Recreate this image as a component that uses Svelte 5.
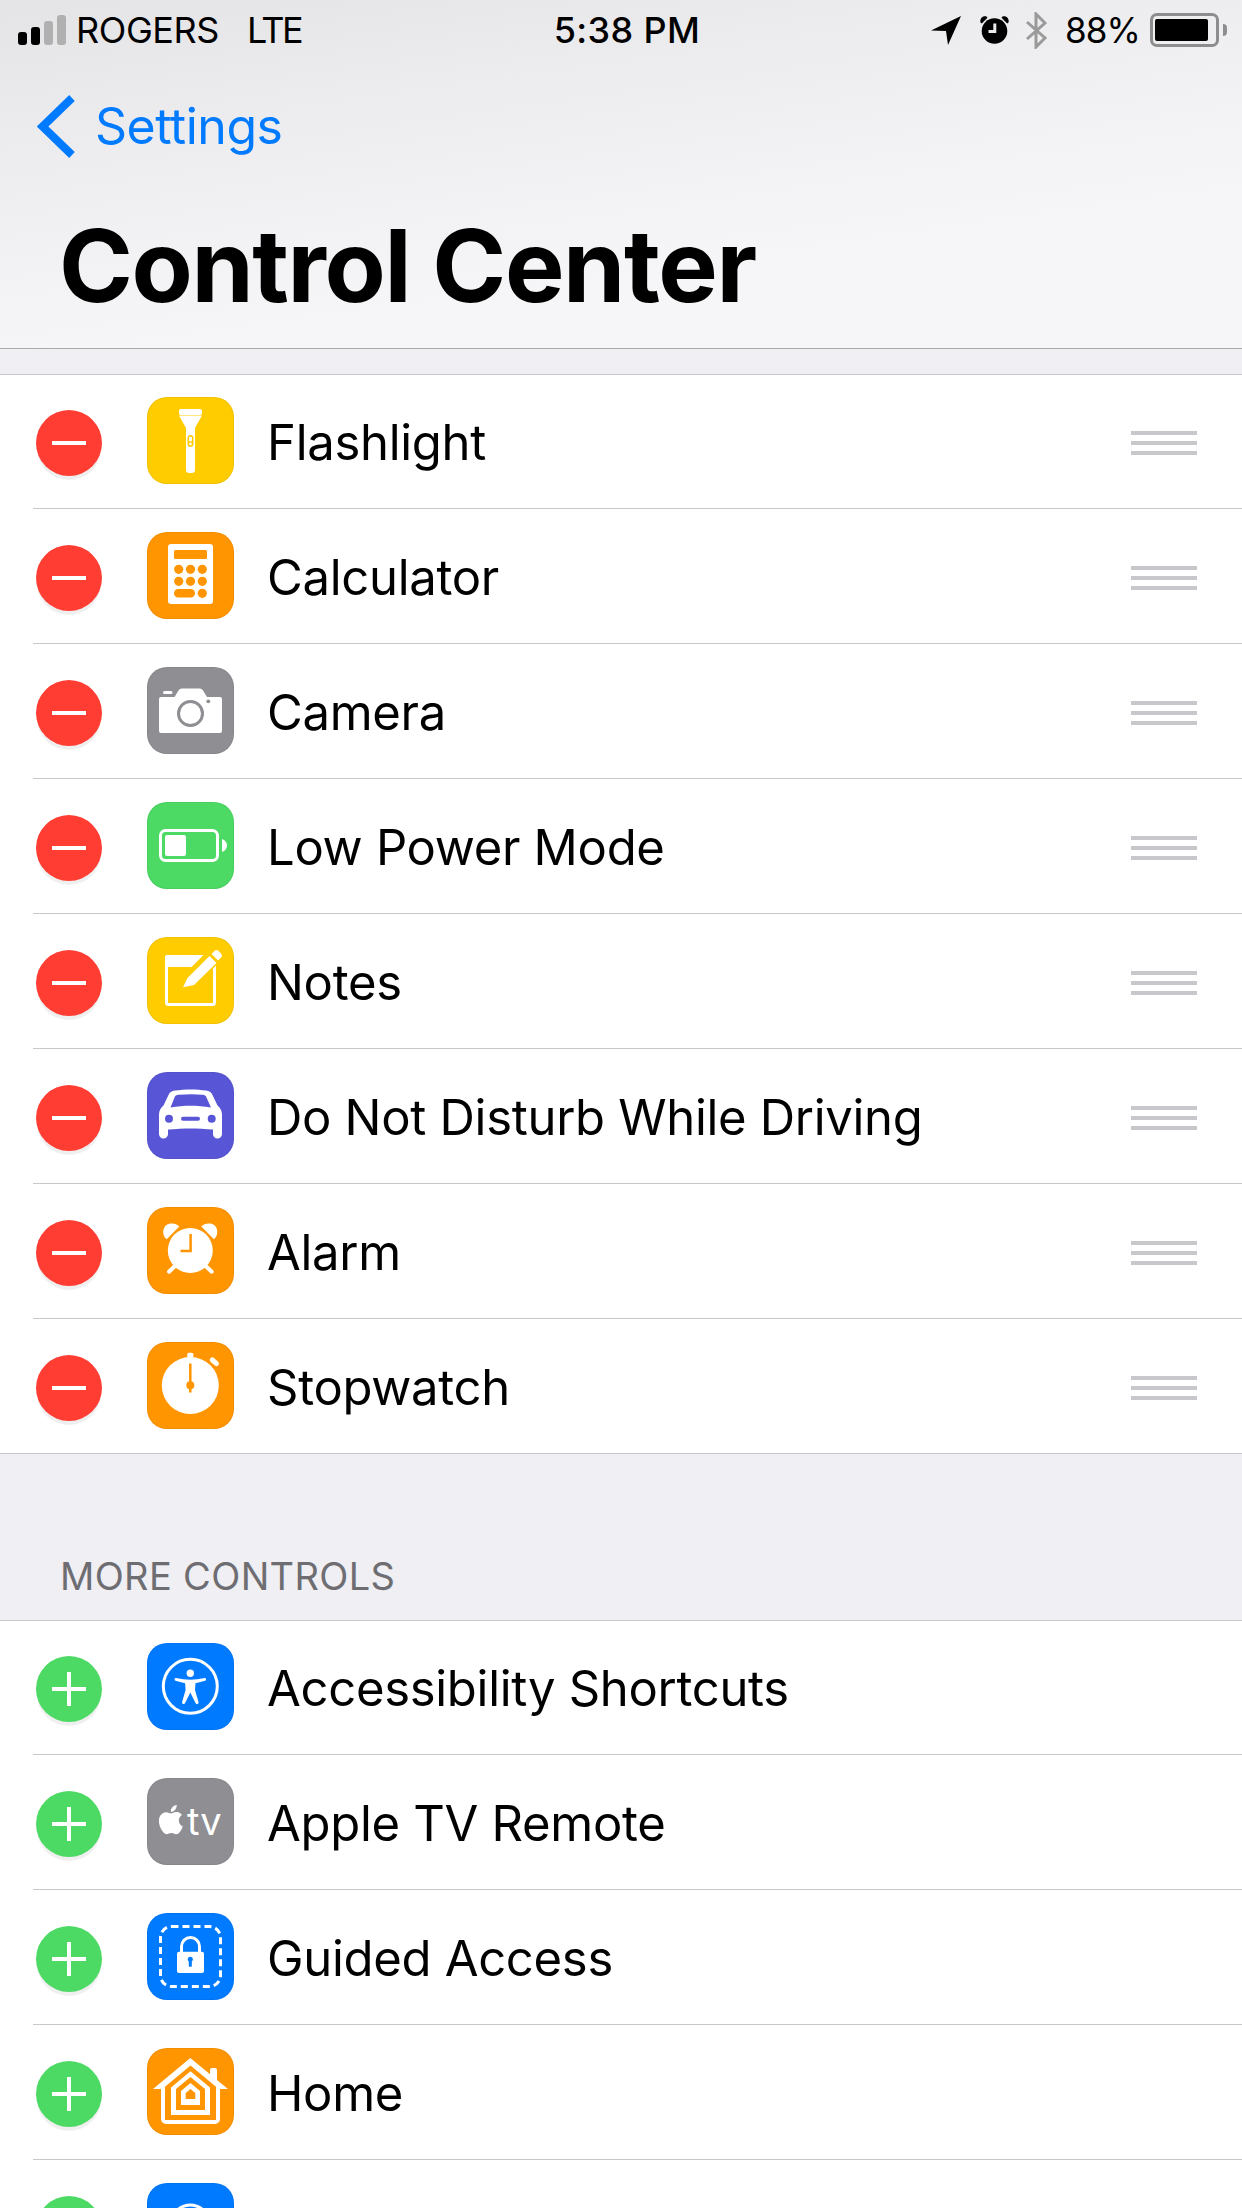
<script>
  const active = [
    { id: 'flash', label: 'Flashlight', tone: 'yellow' },
    { id: 'calc', label: 'Calculator', tone: 'orange' },
    { id: 'camera', label: 'Camera', tone: 'gray' },
    { id: 'battery', label: 'Low Power Mode', tone: 'green' },
    { id: 'notes', label: 'Notes', tone: 'yellow' },
    { id: 'car', label: 'Do Not Disturb While Driving', tone: 'indigo' },
    { id: 'alarm', label: 'Alarm', tone: 'orange' },
    { id: 'stopwatch', label: 'Stopwatch', tone: 'orange' }
  ];
  const more = [
    { id: 'access', label: 'Accessibility Shortcuts', tone: 'blue' },
    { id: 'tv', label: 'Apple TV Remote', tone: 'gray' },
    { id: 'guided', label: 'Guided Access', tone: 'blue' },
    { id: 'home', label: 'Home', tone: 'orange' },
    { id: 'magnifier', label: 'Magnifier', tone: 'blue' }
  ];
</script>

{#snippet glyph(id)}
  <svg class="glyph" viewBox="0 0 87 87" aria-hidden="true">
    {#if id === 'flash'}
      <rect x="32" y="12" width="23" height="6" rx="2" />
      <path d="M32 18.5H55L48 31V73a3 3 0 0 1-3 3H42a3 3 0 0 1-3-3V31Z" />
      <rect class="cut" x="40.5" y="38" width="6" height="12" rx="3" />
      <rect x="42" y="39.5" width="3" height="5" rx="1.5" />
      <circle cx="43.5" cy="47" r="1.4" />
    {:else if id === 'calc'}
      <rect x="21" y="12" width="45" height="60" rx="3" />
      <rect class="cut" x="27" y="18" width="33" height="9" rx="1.5" />
      {#each [37.3, 49.3] as y}
        {#each [31.7, 43.5, 55.3] as x}
          <circle class="cut" cx={x} cy={y} r="4.6" />
        {/each}
      {/each}
      <rect class="cut" x="27" y="57" width="21" height="8.6" rx="4.3" />
      <circle class="cut" cx="55.3" cy="61.3" r="4.6" />
    {:else if id === 'camera'}
      <path d="M12 32a2 2 0 0 1 2-2H27.500L31.500 23.500A4 4 0 0 1 35 21.500H52.500A4 4 0 0 1 56 23.500L60 30H73a2 2 0 0 1 2 2V64a2 2 0 0 1-2 2H14a2 2 0 0 1-2-2Z" />
      <rect x="16" y="24" width="9.500" height="3" rx="1.500" />
      <circle class="line-soft" cx="43.500" cy="46.500" r="12" />
      <circle class="cut" cx="61.300" cy="34.300" r="1.900" />
    {:else if id === 'battery'}
      <rect class="line" x="13.500" y="28.500" width="57" height="30" rx="5" />
      <rect x="18" y="33" width="21" height="21" rx="2" />
      <path d="M75 37C78 38 80 40.500 80 43.500S78 49 75 50Z" />
    {:else if id === 'notes'}
      <rect class="line" x="19.500" y="19.500" width="48" height="48" rx="2" />
      <rect x="18" y="18" width="51" height="12" rx="2" />
      <path class="cut-line" d="M37 49L70 16" />
      <path d="M36 50.300L40.500 41L62.500 19L69.500 26L47 48Z" />
      <path d="M64.500 17L67.500 14A3 3 0 0 1 71.500 14L74 16.500A3 3 0 0 1 74 20.500L71 23.500Z" />
    {:else if id === 'car'}
      <path d="M28 18.500C38 17 50 17 59 18.500C62.500 19 64.500 20.500 65.500 23L70.500 33.500C73 35.500 75 38.500 75 42.500V62a4.500 4.500 0 0 1-9 0V57.500C50 56 37 56 21 57.500V62a4.500 4.500 0 0 1-9 0V42.500C12 38.500 14 35.500 16.500 33.500L21.500 23C22.500 20.500 24.500 19 28 18.500Z" />
      <path class="cut" d="M23.500 35.500L27.500 25.500C28 23.800 29.500 23 31.500 22.800C40 22 48 22 55.500 22.800C57.500 23 59 23.800 59.500 25.500L64 35.500C50 33 37 33 23.500 35.500Z" />
      <circle class="cut" cx="22" cy="46.700" r="4" />
      <circle class="cut" cx="64.700" cy="46.700" r="4" />
      <rect class="cut" x="34" y="44.700" width="19" height="4" rx="2" />
    {:else if id === 'alarm'}
      <circle cx="43.300" cy="43.500" r="22.500" />
      <path class="hand" d="M43.600 27V44H33.500" />
      <path d="M19.700 32.300C13.500 27 16 16 25 16.500C28 16.500 30.500 17.500 32.300 19.500Z" />
      <path d="M66.900 32.300C73.100 27 70.600 16 61.600 16.500C58.600 16.500 56.100 17.500 54.300 19.500Z" />
      <path class="leg" d="M22 64.700L28 59M64.700 64.700L58.700 59" />
    {:else if id === 'stopwatch'}
      <circle cx="43.300" cy="43.500" r="28.500" />
      <rect x="40.300" y="10.700" width="6" height="7" rx="1.500" />
      <path class="leg wide" d="M65.300 18L69.500 21.700" />
      <path class="hand" d="M43.300 21.500V50.500" />
      <circle class="cut" cx="43.300" cy="43.300" r="4" />
    {:else if id === 'access'}
      <circle class="line" cx="43.300" cy="43.300" r="27" />
      <circle cx="43.300" cy="30.300" r="3.700" />
      <path d="M29 35Q43.300 38.500 57.600 35A1.400 1.400 0 0 1 58.200 37.700L48.500 40.300L48 47L51.500 59A1.500 1.500 0 0 1 48.500 60L43.300 49.500L38.100 60A1.500 1.500 0 0 1 35.100 59L38.600 47L38.100 40.300L28.400 37.700A1.400 1.400 0 0 1 29 35Z" />
    {:else if id === 'tv'}
      <g transform="translate(9.200 27) scale(1.220)">
        <path d="M12.152 6.896c-.948 0-2.415-1.078-3.96-1.04-2.04.027-3.91 1.183-4.961 3.014-2.117 3.675-.546 9.103 1.519 12.09 1.013 1.454 2.208 3.09 3.792 3.039 1.52-.065 2.09-.987 3.935-.987 1.831 0 2.35.987 3.96.948 1.637-.026 2.676-1.48 3.676-2.948 1.156-1.688 1.636-3.325 1.662-3.415-.039-.013-3.182-1.221-3.22-4.857-.026-3.04 2.48-4.494 2.597-4.559-1.429-2.09-3.623-2.324-4.39-2.376-2-.156-3.675 1.09-4.61 1.09zM15.530 3.830c.843-1.012 1.400-2.427 1.245-3.830-1.207.052-2.662.805-3.532 1.818-.780.896-1.454 2.338-1.273 3.714 1.338.104 2.715-.688 3.559-1.701" />
      </g>
      <text class="tv" x="40" y="57">tv</text>
    {:else if id === 'guided'}
      <rect class="dash" x="13.500" y="13.500" width="60" height="60" rx="11" />
      <path class="shackle" d="M34.500 39V33.500a9 9 0 0 1 18 0V39" />
      <rect x="30" y="38.700" width="27" height="21.300" rx="2" />
      <circle class="cut" cx="43.300" cy="46.300" r="2.500" />
      <rect class="cut" x="41.800" y="46.500" width="3" height="7.200" />
    {:else if id === 'home'}
      <path d="M43.300 10L63 26.300V22a2 2 0 0 1 2-2H68a2 2 0 0 1 2 2V32L81 41H73V71a5 5 0 0 1-5 5H19a5 5 0 0 1-5-5V41H6Z" />
      <path class="cut" d="M43.500 17.600L69 38.800V72H18V38.800Z" />
      <path d="M43.500 23.300L63 39.500V67H24V39.500Z" />
      <path class="cut" d="M43.500 29L58 41V62H29V41Z" />
      <path d="M43.500 35L53 43V57H34V43Z" />
      <path class="cut" d="M43.500 41L48.300 45V51H38.700V45Z" />
    {:else if id === 'magnifier'}
      <circle class="line" cx="43.300" cy="41" r="19" />
    {/if}
  </svg>
{/snippet}

{#snippet row(item, kind)}
  <li class="row">
    <span class="badge {kind}"></span>
    <span class="tile {item.tone}">{@render glyph(item.id)}</span>
    <span class="label">{item.label}</span>
    {#if kind === 'remove'}
      <span class="grip"><i></i><i></i><i></i></span>
    {/if}
  </li>
{/snippet}

<div class="phone">
  <header class="top">
    <div class="status">
      <div class="status-left">
        <span class="signal"><i class="s1"></i><i class="s2"></i><i class="s3"></i><i class="s4"></i></span>
        <span class="carrier">ROGERS</span>
        <span class="net">LTE</span>
      </div>
      <div class="clock">5:38 PM</div>
      <div class="status-right">
        <svg class="st-loc" viewBox="0 0 30 29"><path d="M30 0L0 14.500L15 15L17 29Z" /></svg>
        <svg class="st-alarm" viewBox="0 0 29 28">
          <circle cx="14.500" cy="15" r="12.800" />
          <path class="st-hand" d="M14.800 7.500V15.500H8.500" />
          <path d="M0.500 6.500C-0.500 2.500 3 -0.500 6.500 0.500L7.500 1.800L1.800 7.500Z" />
          <path d="M28.500 6.500C29.500 2.500 26 -0.500 22.500 0.500L21.500 1.800L27.200 7.500Z" />
        </svg>
        <svg class="st-bt" viewBox="0 0 22 37"><path d="M2 10L20 26L11 35V2L20 11L2 27" /></svg>
        <span class="pct">88%</span>
        <span class="battery"><span class="cell"></span></span>
        <span class="nub"></span>
      </div>
    </div>
    <a class="back" href="#settings">
      <svg class="chev" viewBox="0 0 38 63"><path d="M35 3L5.500 31.500L35 60" /></svg>
      <span>Settings</span>
    </a>
    <h1>Control Center</h1>
  </header>

  <div class="band"></div>
  <ul class="list">
    {#each active as item}
      {@render row(item, 'remove')}
    {/each}
  </ul>

  <h2 class="section">MORE CONTROLS</h2>
  <ul class="list">
    {#each more as item}
      {@render row(item, 'add')}
    {/each}
  </ul>
</div>

<style>
  :global(body) { margin: 0; background: #efeff4; }
  .phone {
    width: 1242px;
    height: 2208px;
    overflow: hidden;
    background: #efeff4;
    font-family: Inter, "Liberation Sans", sans-serif;
    color: #000;
  }
  .top {
    height: 348px;
    border-bottom: 1px solid #a9a9ab;
    background: linear-gradient(172deg, #e4e4e7 0%, #eeeef0 35%, #f6f6f8 70%, #f6f6f8 100%);
    display: flex;
    flex-direction: column;
  }
  .status {
    height: 60px;
    display: grid;
    grid-template-columns: 1fr auto 1fr;
    align-items: center;
  }
  .status-left { display: flex; align-items: center; padding-left: 18px; font-size: 36px; letter-spacing: -0.4px; }
  .signal { display: flex; align-items: flex-end; gap: 4px; height: 30px; margin-right: 10px; }
  .signal i { display: block; width: 9px; border-radius: 3px; background: #000; }
  .s1 { height: 13px; }
  .s2 { height: 18px; }
  .s3 { height: 24px; background: #b0b0b0 !important; }
  .s4 { height: 30px; background: #b0b0b0 !important; }
  .net { margin-left: 28px; letter-spacing: -2.6px; }
  .clock { margin-left: 12px; font-size: 36px; font-weight: 500; letter-spacing: 0.4px; }
  .status-right { display: flex; align-items: center; justify-content: flex-end; font-size: 35px; }
  .st-loc { width: 30px; height: 29px; margin-right: 19px; fill: #000; }
  .st-alarm { width: 29px; height: 28px; margin-right: 16px; fill: #000; }
  .st-hand { fill: none; stroke: #eaeaec; stroke-width: 3; }
  .st-bt { width: 22px; height: 37px; margin-right: 18px; fill: none; stroke: #9a9a9a; stroke-width: 3; }
  .pct { margin-right: 10px; letter-spacing: -0.9px; }
  .battery {
    box-sizing: border-box;
    width: 69px;
    height: 34px;
    border: 3px solid #8d8d8d;
    border-radius: 7px;
    padding: 3px 8px 3px 2px;
    display: flex;
  }
  .cell { flex: 1; background: #000; border-radius: 2px; }
  .nub { width: 4px; height: 12px; margin-left: 4px; margin-right: 15px; background: #8d8d8d; border-radius: 0 6px 6px 0; }
  .back {
    display: flex;
    align-items: center;
    height: 64px;
    margin-top: 34px;
    padding-left: 37px;
    color: #007aff;
    text-decoration: none;
    font-size: 50px;
    letter-spacing: -0.5px;
  }
  .back span { margin-left: 20px; }
  .chev { width: 38px; height: 63px; fill: none; stroke: #007aff; stroke-width: 8; }
  h1 {
    margin: 58px 0 0 59px;
    font-size: 100px;
    line-height: 100px;
    font-weight: 700;
    letter-spacing: -1.4px;
  }
  .band { height: 25px; }
  .list {
    list-style: none;
    margin: 0;
    padding: 0;
    background: #fff;
    border-top: 1px solid #c8c7cc;
    border-bottom: 1px solid #c8c7cc;
  }
  .row {
    box-sizing: border-box;
    height: 135px;
    margin-left: 33px;
    padding: 23px 45px 0 3px;
    border-bottom: 1px solid #c8c7cc;
    display: flex;
    align-items: flex-start;
  }
  .row:first-child { height: 134px; padding-top: 22px; }
  .row:last-child { height: 134px; border-bottom: 0; }
  .badge {
    position: relative;
    flex: none;
    width: 66px;
    height: 66px;
    margin-top: 13px;
    border-radius: 50%;
    box-shadow: 0 5px 1px -1px #efeff0;
  }
  .remove { background: #ff3d33; }
  .add { background: #4cd964; }
  .badge::before, .add::after {
    content: "";
    position: absolute;
    left: 16px;
    top: 31px;
    width: 34px;
    height: 4px;
    background: #fff;
  }
  .add::after { left: 31px; top: 16px; width: 4px; height: 34px; }
  .tile {
    flex: none;
    width: 87px;
    height: 87px;
    margin-left: 45px;
    border-radius: 20px;
    background: var(--tile);
    box-shadow: inset 0 0 0 1px rgba(0, 0, 0, 0.05);
  }
  .yellow { --tile: #ffcc00; }
  .orange { --tile: #ff9500; }
  .gray { --tile: #8e8e93; }
  .green { --tile: #4cd964; }
  .indigo { --tile: #5856d6; }
  .blue { --tile: #007aff; }
  .glyph { display: block; width: 87px; height: 87px; fill: #fff; }
  .cut { fill: var(--tile); }
  .line { fill: none; stroke: #fff; stroke-width: 3; }
  .line-soft { fill: #fff; stroke: #8e8e93; stroke-width: 3; }
  .cut-line { fill: none; stroke: var(--tile); stroke-width: 16; }
  .hand { fill: none; stroke: var(--tile); stroke-width: 2.500; }
  .leg { fill: none; stroke: #fff; stroke-width: 4; stroke-linecap: round; }
  .wide { stroke-width: 5; }
  .dash { fill: none; stroke: #fff; stroke-width: 3; stroke-dasharray: 7 4; }
  .shackle { fill: none; stroke: #fff; stroke-width: 3; }
  .tv { fill: #fff; font-size: 38px; font-family: Inter, sans-serif; }
  .label {
    margin-left: 33px;
    margin-top: 20px;
    font-size: 49px;
    line-height: 52px;
    letter-spacing: -0.3px;
    white-space: nowrap;
  }
  .grip { margin-left: auto; margin-top: 34px; display: flex; flex-direction: column; gap: 6px; }
  .grip i { display: block; width: 66px; height: 4px; background: #c7c7cc; }
  .section {
    margin: 0;
    height: 166px;
    box-sizing: border-box;
    padding: 99px 0 0 60px;
    font-size: 38px;
    line-height: 46px;
    font-weight: 400;
    letter-spacing: 0.35px;
    color: #6d6d72;
  }
</style>
